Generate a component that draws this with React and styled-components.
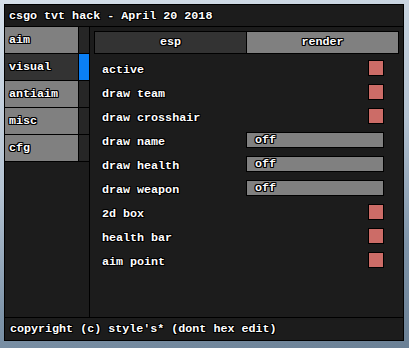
import React from 'react'
import styled, { createGlobalStyle } from 'styled-components'

const GlobalStyle = createGlobalStyle`
    html, body {
        margin: 0;
        padding: 0;
    }
    body {
        font-family: 'Liberation Mono', 'DejaVu Sans Mono', monospace;
    }
`;

const outline = `
    color: #ffffff;
    font-family: 'Liberation Mono', 'DejaVu Sans Mono', monospace;
    font-weight: bold;
    font-size: 11.7px;
    text-shadow: 1px 0 0 #000, -1px 0 0 #000, 0 1px 0 #000, 0 -1px 0 #000,
        1px 1px 0 #000, -1px -1px 0 #000, 1px -1px 0 #000, -1px 1px 0 #000;
`;

const Page = styled.div`
    width: 409px;
    height: 348px;
    box-sizing: border-box;
    padding: 4px;
    background: linear-gradient(170deg, #d6e0ea 0%, #b4c3d2 45%, #7e94a9 75%, #6a8095 100%);
    overflow: hidden;
`;

const Window = styled.div`
    width: 400px;
    height: 337px;
    box-sizing: border-box;
    border: 1px solid #000;
    background: #1c1c1c;
    display: flex;
    flex-direction: column;
`;

const TitleBar = styled.div`
    height: 21px;
    border-bottom: 1px solid #000;
    display: flex;
    align-items: center;
    padding-left: 4px;
    ${outline}
`;

const Body = styled.div`
    flex: 1;
    display: flex;
    min-height: 0;
`;

const Sidebar = styled.div`
    width: 84px;
    border-right: 1px solid #000;
    display: flex;
    flex-direction: column;
`;

const NavRow = styled.div`
    display: flex;
    height: 26px;
    border-bottom: 1px solid #000;
`;

const NavButton = styled.div`
    width: 74px;
    border-right: 1px solid #000;
    background: ${p => (p.$active ? '#333333' : '#808080')};
    display: flex;
    align-items: center;
    padding-left: 4px;
    box-sizing: border-box;
    ${outline}
`;

const Indicator = styled.div`
    flex: 1;
    background: ${p => (p.$active ? '#0a7ff5' : '#262626')};
`;

const Content = styled.div`
    flex: 1;
    display: flex;
    flex-direction: column;
    padding: 4px 4px 0 4px;
`;

const Tabs = styled.div`
    display: flex;
    height: 23px;
    margin-bottom: 2px;
`;

const Tab = styled.div`
    flex: 1;
    box-sizing: border-box;
    border: 1px solid #000;
    background: ${p => (p.$active ? '#808080' : '#333333')};
    display: flex;
    align-items: center;
    justify-content: center;
    padding-bottom: 1px;
    & + & {
        border-left: none;
    }
    ${outline}
`;

const Row = styled.div`
    height: 24px;
    display: flex;
    align-items: center;
    padding: 0 15px 0 8px;
`;

const Label = styled.span`
    flex: 1;
    padding-top: 3px;
    ${outline}
`;

const Checkbox = styled.div`
    width: 16px;
    height: 16px;
    box-sizing: border-box;
    border: 1px solid #000;
    background: #cc6c67;
`;

const Select = styled.div`
    width: 138px;
    height: 16px;
    box-sizing: border-box;
    border: 1px solid #000;
    background: #808080;
    display: flex;
    align-items: center;
    padding-left: 8px;
    ${outline}
`;

const Footer = styled.div`
    height: 22px;
    border-top: 1px solid #000;
    display: flex;
    align-items: center;
    padding-left: 5px;
    ${outline}
`;

const navItems = ['aim', 'visual', 'antiaim', 'misc', 'cfg'];

const options = [
    { label: 'active', type: 'check' },
    { label: 'draw team', type: 'check' },
    { label: 'draw crosshair', type: 'check' },
    { label: 'draw name', type: 'select' },
    { label: 'draw health', type: 'select' },
    { label: 'draw weapon', type: 'select' },
    { label: '2d box', type: 'check' },
    { label: 'health bar', type: 'check' },
    { label: 'aim point', type: 'check' },
];

const App = () => {
    return (
        <>
            <GlobalStyle />
            <Page>
                <Window>
                    <TitleBar>csgo tvt hack - April 20 2018</TitleBar>
                    <Body>
                        <Sidebar>
                            {navItems.map(item => (
                                <NavRow key={item}>
                                    <NavButton $active={item === 'visual'}>{item}</NavButton>
                                    <Indicator $active={item === 'visual'} />
                                </NavRow>
                            ))}
                        </Sidebar>
                        <Content>
                            <Tabs>
                                <Tab>esp</Tab>
                                <Tab $active>render</Tab>
                            </Tabs>
                            {options.map(opt => (
                                <Row key={opt.label}>
                                    <Label>{opt.label}</Label>
                                    {opt.type === 'check' ? <Checkbox /> : <Select>off</Select>}
                                </Row>
                            ))}
                        </Content>
                    </Body>
                    <Footer>copyright (c) style's* (dont hex edit)</Footer>
                </Window>
            </Page>
        </>
    )
}

export default App
